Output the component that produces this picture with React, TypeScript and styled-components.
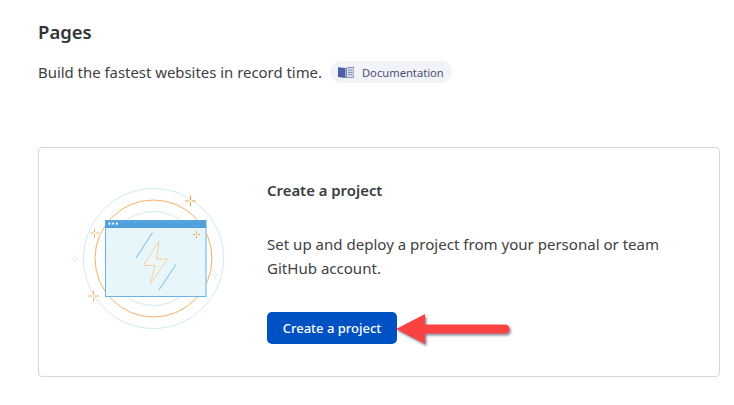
import React from "react";
import styled, { createGlobalStyle } from "styled-components";

const Global = createGlobalStyle`
  html, body { margin: 0; padding: 0; background: #fff; }
  body { font-family: "Noto Sans", "Open Sans", "Liberation Sans", sans-serif; color: #36393a; }
`;
const Page = styled.main`
  position: relative;
  width: 734px;
  height: 405px;
  overflow: hidden;
  box-sizing: border-box;
  padding: 20px 14px 0 38px;
`;
const Title = styled.h1`
  margin: 0;
  font-size: 18.5px;
  line-height: 23px;
  font-weight: 600;
  color: #313436;
`;
const Intro = styled.div`
  display: flex;
  align-items: center;
  margin-top: 18px;
  height: 22px;
`;
const Lead = styled.p`
  margin: 0;
  font-size: 14.9px;
  line-height: 22px;
  color: #3e4142;
`;
const Pill = styled.a`
  display: inline-flex;
  align-items: center;
  gap: 8px;
  margin-left: 8px;
  height: 22px;
  padding: 0 8px;
  border-radius: 11px;
  background: #f2f3f8;
  color: #4b4f73;
  font-size: 11.2px;
`;
const Card = styled.section`
  display: flex;
  box-sizing: border-box;
  width: 682px;
  height: 230px;
  margin-top: 64px;
  border: 1px solid #d5d7d8;
  border-radius: 4px;
`;
const Art = styled.svg`
  flex: none;
  width: 180px;
  height: 160px;
  margin: 27px 0 0 21px;
`;
const Body = styled.div`
  margin-left: 27px;
  padding-top: 32px;
  width: 430px;
`;
const CardTitle = styled.h2`
  margin: 0;
  font-size: 14.9px;
  line-height: 20px;
  font-weight: 600;
  color: #3a3d3f;
`;
const CardText = styled.p`
  margin: 32px 0 0;
  font-size: 15.05px;
  line-height: 24px;
  color: #3e4142;
`;
const Button = styled.button`
  display: block;
  margin-top: 32px;
  width: 130px;
  height: 32px;
  padding: 0;
  border: 0;
  border-radius: 5px;
  background: #0051c3;
  color: #fff;
  font: 500 13px "Noto Sans", "Open Sans", sans-serif;
`;
const Arrow = styled.svg`
  position: absolute;
  left: 390px;
  top: 305px;
  width: 130px;
  height: 50px;
`;

const Spark = ({ x, y, r, c }: { x: number; y: number; r: number; c: string }) => (
  <path d={`M${x - r} ${y}H${x - 1}M${x + 1} ${y}H${x + r}M${x} ${y - r}V${y - 1}M${x} ${y + 1}V${y + r}`} stroke={c} strokeWidth="1" fill="none" />
);

const Illustration = () => (
  <Art viewBox="60 175 180 160" aria-hidden="true">
    <defs>
      <pattern id="dots" width="3" height="3" patternUnits="userSpaceOnUse">
        <rect width="1" height="1" fill="#fff" opacity="0.25" />
      </pattern>
    </defs>
    <circle cx="153.5" cy="258.5" r="70" fill="none" stroke="#cfeaf3" strokeWidth="1" />
    <circle cx="153.5" cy="258.5" r="58.5" fill="none" stroke="#f3b267" strokeWidth="1" />
    <circle cx="153.5" cy="258.5" r="47" fill="none" stroke="#cfeaf3" strokeWidth="1" />
    <rect x="105.5" y="220.5" width="100.5" height="76" fill="#e7f6fb" stroke="#6cb2e4" strokeWidth="1" />
    <rect x="105.5" y="220.5" width="100.5" height="7.5" fill="#4c9fdb" />
    <rect x="105.5" y="220.5" width="100.5" height="7.5" fill="url(#dots)" />
    <circle cx="109.5" cy="223.7" r="1.1" fill="#fff" />
    <circle cx="113.2" cy="223.7" r="1.1" fill="#fff" />
    <circle cx="116.9" cy="223.7" r="1.1" fill="#fff" />
    <path d="M136 258L152.5 232.5M159 290L176 264.5" stroke="#6cb2e4" strokeWidth="0.9" fill="none" />
    <path d="M159 241L143.5 265.5H155L150.5 283.5L167.5 259H156.5Z" fill="#eef7f7" stroke="#f8d09c" strokeWidth="1" strokeLinejoin="round" />
    <Spark x={190.5} y={201} r={5.5} c="#e9a24f" />
    <Spark x={94.5} y={233} r={4.5} c="#f0b26c" />
    <Spark x={196.5} y={234.5} r={3.5} c="#f0a654" />
    <Spark x={93.5} y={296} r={5.5} c="#f0b26c" />
    <Spark x={75} y={259} r={4} c="#d3eef6" />
    <Spark x={215} y={275} r={4} c="#d8edf3" />
  </Art>
);

export default function App() {
  return (
    <Page>
      <Global />
      <Title>Pages</Title>
      <Intro>
        <Lead>Build the fastest websites in record time.</Lead>
        <Pill>
          <svg width="16" height="12" viewBox="0 0 16 12" aria-hidden="true">
            <path d="M0 1.2L7.5 2V12L0 11Z" fill="#4a5fa5" />
            <path d="M8.5 2L16 1.2V11L8.5 12Z" fill="#dfe3ef" stroke="#5b6ba5" strokeWidth="0.8" />
            <path d="M10 4.2h4.5M10 6.4h4.5M10 8.6h4.5" stroke="#5b6ba5" strokeWidth="0.8" />
          </svg>
          Documentation
        </Pill>
      </Intro>
      <Card>
        <Illustration />
        <Body>
          <CardTitle>Create a project</CardTitle>
          <CardText>
            Set up and deploy a project from your personal or team
            <br />
            GitHub account.
          </CardText>
          <Button>Create a project</Button>
        </Body>
      </Card>
      <Arrow viewBox="390 305 130 50" aria-hidden="true">
        <defs>
          <filter id="arrowShadow" x="-10%" y="-20%" width="120%" height="150%">
            <feDropShadow dx="1.5" dy="2" stdDeviation="0.8" floodColor="#55556a" floodOpacity="0.7" />
          </filter>
        </defs>
        <path
          d="M396 329L425 314V324.5H505a4.5 4.5 0 0 1 0 9H425V344Z"
          fill="#fb4343"
          filter="url(#arrowShadow)"
        />
      </Arrow>
    </Page>
  );
}
